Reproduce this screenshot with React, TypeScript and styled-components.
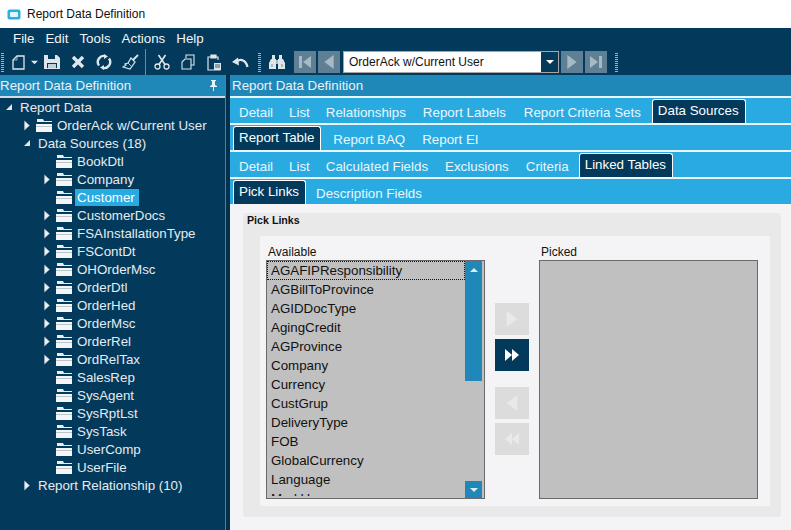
import styled, { createGlobalStyle } from "styled-components";

const navy = "#033a5c";
const sky = "#29abe2";
const steel = "#2088b8";

const Global = createGlobalStyle`
  html, body { margin: 0; padding: 0; background: #f4f4f6; }
  body { font-family: "Liberation Sans", Arial, sans-serif; overflow: hidden; }
`;

const Window = styled.div`
  width: 791px;
  height: 530px;
  display: flex;
  flex-direction: column;
  overflow: hidden;
  background: ${navy};
`;

const TitleBar = styled.div`
  height: 28px;
  flex: none;
  background: #fff;
  display: flex;
  align-items: center;
  gap: 6px;
  padding-left: 7px;
  font-size: 12px;
  color: #111;
`;

const MenuBar = styled.div`
  height: 21px;
  flex: none;
  display: flex;
  align-items: center;
  padding-left: 13px;
  gap: 11px;
  font-size: 13.33px;
  color: #f2f5f7;
`;

const Toolbar = styled.div`
  height: 26px;
  flex: none;
  display: flex;
  align-items: center;
  padding-left: 1px;
`;

const Grip = styled.div<{ $ml?: number }>`
  width: 3px;
  height: 19px;
  flex: none;
  margin: 0 2px 0 ${(p) => p.$ml ?? 0}px;
  background: repeating-linear-gradient(to bottom, #9fb0bc 0 1px, transparent 1px 2px);
`;

const ToolIcon = styled.span<{ $w?: number }>`
  width: ${(p) => p.$w ?? 26}px;
  height: 26px;
  flex: none;
  display: flex;
  align-items: center;
  justify-content: center;
`;

const ToolDivider = styled.div`
  width: 1px;
  height: 26px;
  flex: none;
  margin: 0 3px 0 2px;
  background: #6f8a9c;
`;

const NavGroup = styled.div`
  display: flex;
  align-items: center;
  margin-left: 3px;
`;

const NavButton = styled.span`
  width: 22px;
  height: 22px;
  flex: none;
  margin-right: 2px;
  display: flex;
  align-items: center;
  justify-content: center;
  background: #5f7f94;
`;

const Combo = styled.div`
  width: 216px;
  height: 22px;
  flex: none;
  box-sizing: border-box;
  margin: 0 2px 0 1px;
  border: 1px solid #a5a5a5;
  background: #fff;
  display: flex;
  align-items: center;
  padding-left: 5px;
  font-size: 12px;
  color: #111;
`;

const ComboText = styled.span`
  flex: 1;
`;

const ComboArrow = styled.span`
  width: 17px;
  height: 20px;
  display: flex;
  align-items: center;
  justify-content: center;
  background: ${navy};
`;

const Main = styled.div`
  flex: 1;
  display: flex;
  min-height: 0;
`;

const LeftPane = styled.div`
  width: 226px;
  box-sizing: border-box;
  flex: none;
  display: flex;
  flex-direction: column;
  border-right: 1px solid #5f7a8c;
`;

const PaneHeader = styled.div<{ $pad: number }>`
  height: 21px;
  flex: none;
  background: ${steel};
  color: #e9f3f8;
  font-size: 13.33px;
  display: flex;
  align-items: center;
  justify-content: space-between;
  padding: 0 7px 0 ${(p) => p.$pad}px;
`;

const Tree = styled.div`
  flex: 1;
  border-top: 2px solid #d5dde2;
  color: #e6ebef;
  font-size: 13.33px;
`;

const TreeRow = styled.div<{ $indent: number }>`
  height: 18px;
  display: flex;
  align-items: center;
  padding-left: ${(p) => p.$indent}px;
`;

const Twisty = styled.span`
  width: 13px;
  flex: none;
  margin-right: 3px;
  display: flex;
  align-items: center;
  justify-content: center;
`;

const FolderBox = styled.span`
  width: 16px;
  flex: none;
  margin-right: 3px;
  display: flex;
`;

const TreeLabel = styled.span<{ $selected?: boolean }>`
  padding: 0 4px 0 2px;
  line-height: 17px;
  background: ${(p) => (p.$selected ? sky : "transparent")};
  color: ${(p) => (p.$selected ? "#fff" : "inherit")};
`;

const Splitter = styled.div`
  width: 4px;
  flex: none;
  background: #02304d;
`;

const RightPane = styled.div`
  flex: 1;
  display: flex;
  flex-direction: column;
  background: #f4f4f6;
  min-width: 0;
`;

const TabRow = styled.div`
  height: 27px;
  flex: none;
  box-sizing: border-box;
  background: ${sky};
  border-top: 2px solid #e9f6fc;
  display: flex;
  align-items: flex-end;
  padding-left: 1px;
`;

const Tab = styled.div<{ $active?: boolean; $ml?: number; $mr?: number }>`
  height: ${(p) => (p.$active ? 24 : 22)}px;
  box-sizing: border-box;
  padding: ${(p) => (p.$active ? "0 6px 3px 5px" : "0 8px")};
  margin-left: ${(p) => p.$ml ?? 0}px;
  margin-right: ${(p) => p.$mr ?? 0}px;
  display: flex;
  align-items: center;
  font-size: 13.33px;
  color: ${(p) => (p.$active ? "#fff" : "#eaf7fd")};
  background: ${(p) => (p.$active ? navy : "transparent")};
  border: ${(p) => (p.$active ? "1px solid #fff" : "none")};
  border-bottom: none;
  border-radius: 3px 3px 0 0;
`;

const Content = styled.div`
  flex: 1;
  padding: 9px 10px 13px 13px;
  display: flex;
  min-height: 0;
`;

const GroupBox = styled.div`
  flex: 1;
  position: relative;
  background: #e9e9e9;
  border-radius: 3px;
  padding: 23px 11px 11px 17px;
  display: flex;
`;

const GroupTitle = styled.div`
  position: absolute;
  left: 4px;
  top: 1px;
  font-size: 10.67px;
  font-weight: bold;
  color: #111;
`;

const GroupInner = styled.div`
  flex: 1;
  background: #f4f4f6;
  padding: 9px 12px 7px 6px;
  display: flex;
`;

const ListColumn = styled.div`
  width: 219px;
  flex: none;
  display: flex;
  flex-direction: column;
`;

const ListLabel = styled.div`
  height: 15px;
  padding-left: 2px;
  font-size: 12px;
  line-height: 15px;
  color: #111;
`;

const ListBox = styled.div`
  flex: 1;
  box-sizing: border-box;
  position: relative;
  background: #c0c0c0;
  border: 1px solid #6a6a6a;
  overflow: hidden;
  min-height: 0;
`;

const ListItems = styled.div`
  height: 235px;
  overflow: hidden;
`;

const ListItem = styled.div<{ $focus?: boolean }>`
  height: 19px;
  box-sizing: border-box;
  width: 198px;
  padding-left: 4px;
  font-size: 13.33px;
  line-height: 19px;
  color: #111;
  outline: ${(p) => (p.$focus ? "1px dotted #111" : "none")};
  outline-offset: -1px;
`;

const ScrollTrack = styled.div`
  position: absolute;
  right: 2px;
  top: 0;
  bottom: 0;
  width: 17px;
  display: flex;
  flex-direction: column;
`;

const ScrollThumb = styled.div`
  height: 120px;
  background: ${steel};
  display: flex;
  justify-content: center;
  padding-top: 5px;
  box-sizing: border-box;
`;

const ScrollDown = styled.div`
  margin-top: auto;
  height: 17px;
  background: ${steel};
  display: flex;
  justify-content: center;
  align-items: center;
`;

const MoveColumn = styled.div`
  width: 54px;
  flex: none;
  padding: 58px 10px 0;
  box-sizing: border-box;
  display: flex;
  flex-direction: column;
`;

const MoveButton = styled.div<{ $on?: boolean; $gap: number }>`
  width: 34px;
  height: 32px;
  flex: none;
  margin-bottom: ${(p) => p.$gap}px;
  background: ${(p) => (p.$on ? navy : "#dcdcdc")};
  display: flex;
  align-items: center;
  justify-content: center;
`;

const Triangle = ({ dir, fill, size = 12 }: { dir: "l" | "r" | "u" | "d"; fill: string; size?: number }) => {
  const pts = { r: "2,0 10,6 2,12", l: "10,0 2,6 10,12", u: "0,9 6,3 12,9", d: "0,3 12,3 6,9" }[dir];
  return (
    <svg width={size} height={size} viewBox="0 0 12 12">
      <polygon points={pts} fill={fill} />
    </svg>
  );
};

const Double = ({ dir, fill }: { dir: "l" | "r"; fill: string }) => (
  <svg width="16" height="14" viewBox="0 0 16 14">
    <polygon points={dir === "r" ? "1,1 8,7 1,13" : "8,1 1,7 8,13"} fill={fill} />
    <polygon points={dir === "r" ? "8,1 15,7 8,13" : "15,1 8,7 15,13"} fill={fill} />
  </svg>
);

const Folder = () => (
  <svg width="16" height="13" viewBox="0 0 16 13">
    <path d="M1 0h6l1 2h8v1H1z" fill="#e8edf0" />
    <path d="M0 5h16v8H0z" fill="#f3f5f6" />
    <path d="M0 7h16v1H0z" fill="#b9c5cd" />
  </svg>
);

const Expand = () => (
  <svg width="8" height="11" viewBox="0 0 8 11">
    <polygon points="1.5,1 6.5,5.5 1.5,10" fill="#eef1f3" stroke="#9fb0bc" strokeWidth="0.6" />
  </svg>
);

const Collapse = () => (
  <svg width="8" height="8" viewBox="0 0 8 8">
    <polygon points="7,1 7,7 1,7" fill="#dfe5e9" />
  </svg>
);

const ic = "#dfe6ea";

const NewIcon = () => (
  <svg width="13" height="15" viewBox="0 0 13 15" fill="none" stroke={ic} strokeWidth="1.3">
    <path d="M5 1h7v13H1V5z" />
    <path d="M5 1v4H1" strokeWidth="0.7" />
  </svg>
);
const SaveIcon = () => (
  <svg width="16" height="16" viewBox="0 0 16 16">
    <path d="M0 1h13l3 3v11H0z" fill={ic} />
    <path d="M4 1h7v4H4zM3 9h10v5H3z" fill={navy} />
    <path d="M4 10h8v4H4z" fill="#c4d0d8" />
  </svg>
);
const CloseIcon = () => (
  <svg width="14" height="14" viewBox="0 0 14 14">
    <path d="M2 2l10 10M12 2L2 12" stroke={ic} strokeWidth="3.4" />
  </svg>
);
const RefreshIcon = () => (
  <svg width="16" height="16" viewBox="0 0 16 16" fill="none" stroke={ic} strokeWidth="2.4">
    <path d="M3 11.5A6 6 0 0 1 9.5 2.2" />
    <path d="M13 4.5A6 6 0 0 1 6.5 13.8" />
    <path d="M8 0l4 2.5-4 2.5zM8 16l-4-2.5 4-2.5z" fill={ic} stroke="none" />
  </svg>
);
const BroomIcon = () => (
  <svg width="17" height="17" viewBox="0 0 17 17" fill="none" stroke={ic} strokeWidth="1.2">
    <path d="M16 1l-5 5" strokeWidth="1.8" />
    <path d="M9 4l4 4-5 7-7-2 3-2-1-1 3-1z" />
    <path d="M6 9l3 3" strokeWidth="0.8" />
  </svg>
);
const CutIcon = () => (
  <svg width="16" height="16" viewBox="0 0 16 16" fill="none" stroke={ic} strokeWidth="1.3">
    <circle cx="3.5" cy="12.5" r="2.5" />
    <circle cx="12.5" cy="12.5" r="2.5" />
    <path d="M5 10.5L11.5 1M11 10.5L4.5 1" strokeWidth="1.6" />
  </svg>
);
const CopyIcon = () => (
  <svg width="14" height="16" viewBox="0 0 14 16" fill="none" stroke={ic} strokeWidth="1.1">
    <path d="M5 4V1h8v10h-3" />
    <path d="M4 5h6v10H1V8z" />
  </svg>
);
const PasteIcon = () => (
  <svg width="15" height="17" viewBox="0 0 15 17" fill="none" stroke={ic} strokeWidth="1.2">
    <path d="M4 3H1v13h12V9M11 6V3H8" />
    <path d="M4 1h5v3H4z" fill={ic} />
    <path d="M7 9h7v7H7z" fill={ic} stroke="none" />
    <path d="M8 11h5M8 13h5" stroke={navy} strokeWidth="0.8" />
  </svg>
);
const UndoIcon = () => (
  <svg width="17" height="12" viewBox="0 0 17 12" fill="none">
    <path d="M4 6.5C7 2.5 13.5 2.5 15.5 11" stroke={ic} strokeWidth="2.2" />
    <polygon points="0,6 6,1.5 7,9.5" fill={ic} />
  </svg>
);
const BinocularsIcon = () => (
  <svg width="16" height="14" viewBox="0 0 16 14">
    <path d="M3 0h3v4h1v10H0V8l2-4h1zM10 0h3v4h1l2 4v6H9V4h1z" fill={ic} />
    <path d="M7 5h2v4H7z" fill="#a9bac5" />
    <path d="M2 9h2v3H2zM12 9h2v3h-2z" fill="#a9bac5" />
  </svg>
);
const SkipIcon = ({ flip }: { flip?: boolean }) => (
  <svg width="14" height="14" viewBox="0 0 14 14" style={flip ? { transform: "scaleX(-1)" } : undefined}>
    <path d="M1 1h3v12H1z M13 1v12L5 7z" fill="#a6b9c5" />
  </svg>
);
const PinIcon = () => (
  <svg width="9" height="11" viewBox="0 0 9 11">
    <path d="M2 0h5v1H6v4l2 1v1H5v4H4V7H1V6l2-1V1H2z" fill="#e9f3f8" />
  </svg>
);

const AppIcon = () => (
  <svg width="14" height="11" viewBox="0 0 14 11">
    <rect x="0.5" y="0.5" width="13" height="10" rx="2" fill="#2bb0e4" />
    <rect x="3" y="3" width="8" height="5" rx="1" fill="#e4f6fd" />
  </svg>
);

const sources: { name: string; kids?: boolean; selected?: boolean }[] = [
  { name: "BookDtl" },
  { name: "Company", kids: true },
  { name: "Customer", selected: true },
  { name: "CustomerDocs", kids: true },
  { name: "FSAInstallationType", kids: true },
  { name: "FSContDt", kids: true },
  { name: "OHOrderMsc", kids: true },
  { name: "OrderDtl", kids: true },
  { name: "OrderHed", kids: true },
  { name: "OrderMsc", kids: true },
  { name: "OrderRel", kids: true },
  { name: "OrdRelTax", kids: true },
  { name: "SalesRep" },
  { name: "SysAgent" },
  { name: "SysRptLst" },
  { name: "SysTask" },
  { name: "UserComp" },
  { name: "UserFile" },
];

const available = [
  "AGAFIPResponsibility",
  "AGBillToProvince",
  "AGIDDocType",
  "AgingCredit",
  "AGProvince",
  "Company",
  "Currency",
  "CustGrup",
  "DeliveryType",
  "FOB",
  "GlobalCurrency",
  "Language",
  "MarkUp",
];

export default function App() {
  return (
    <Window>
      <Global />
      <TitleBar>
        <AppIcon />
        Report Data Definition
      </TitleBar>
      <MenuBar>
        <span>File</span>
        <span>Edit</span>
        <span>Tools</span>
        <span>Actions</span>
        <span>Help</span>
      </MenuBar>
      <Toolbar>
        <Grip />
        <ToolIcon $w={24}><NewIcon /></ToolIcon>
        <ToolIcon $w={9}><Triangle dir="d" fill={ic} size={7} /></ToolIcon>
        <ToolIcon><SaveIcon /></ToolIcon>
        <ToolIcon><CloseIcon /></ToolIcon>
        <ToolIcon><RefreshIcon /></ToolIcon>
        <ToolIcon><BroomIcon /></ToolIcon>
        <ToolDivider />
        <ToolIcon><CutIcon /></ToolIcon>
        <ToolIcon><CopyIcon /></ToolIcon>
        <ToolIcon><PasteIcon /></ToolIcon>
        <ToolIcon><UndoIcon /></ToolIcon>
        <Grip $ml={5} />
        <ToolIcon $w={28}><BinocularsIcon /></ToolIcon>
        <NavGroup>
          <NavButton><SkipIcon /></NavButton>
          <NavButton><Triangle dir="l" fill="#a6b9c5" size={14} /></NavButton>
          <Combo>
            <ComboText>OrderAck w/Current User</ComboText>
            <ComboArrow><Triangle dir="d" fill="#fff" size={8} /></ComboArrow>
          </Combo>
          <NavButton><Triangle dir="r" fill="#a6b9c5" size={14} /></NavButton>
          <NavButton><SkipIcon flip /></NavButton>
        </NavGroup>
        <Grip $ml={6} />
      </Toolbar>
      <Main>
        <LeftPane>
          <PaneHeader $pad={0}>
            Report Data Definition
            <PinIcon />
          </PaneHeader>
          <Tree>
            <TreeRow $indent={2}>
              <Twisty><Collapse /></Twisty>
              <TreeLabel>Report Data</TreeLabel>
            </TreeRow>
            <TreeRow $indent={20}>
              <Twisty><Expand /></Twisty>
              <FolderBox><Folder /></FolderBox>
              <TreeLabel>OrderAck w/Current User</TreeLabel>
            </TreeRow>
            <TreeRow $indent={20}>
              <Twisty><Collapse /></Twisty>
              <TreeLabel>Data Sources (18)</TreeLabel>
            </TreeRow>
            {sources.map((s) => (
              <TreeRow $indent={40} key={s.name}>
                <Twisty>{s.kids && <Expand />}</Twisty>
                <FolderBox><Folder /></FolderBox>
                <TreeLabel $selected={s.selected}>{s.name}</TreeLabel>
              </TreeRow>
            ))}
            <TreeRow $indent={20}>
              <Twisty><Expand /></Twisty>
              <TreeLabel>Report Relationship (10)</TreeLabel>
            </TreeRow>
          </Tree>
        </LeftPane>
        <Splitter />
        <RightPane>
          <PaneHeader $pad={2}>Report Data Definition</PaneHeader>
          <TabRow>
            <Tab>Detail</Tab>
            <Tab>List</Tab>
            <Tab $mr={1}>Relationships</Tab>
            <Tab $mr={2}>Report Labels</Tab>
            <Tab>Report Criteria Sets</Tab>
            <Tab $active $ml={3}>Data Sources</Tab>
          </TabRow>
          <TabRow>
            <Tab $active $ml={2} $mr={4}>Report Table</Tab>
            <Tab $mr={1}>Report BAQ</Tab>
            <Tab>Report EI</Tab>
          </TabRow>
          <TabRow>
            <Tab>Detail</Tab>
            <Tab>List</Tab>
            <Tab $mr={1}>Calculated Fields</Tab>
            <Tab $mr={1}>Exclusions</Tab>
            <Tab>Criteria</Tab>
            <Tab $active $ml={2}>Linked Tables</Tab>
          </TabRow>
          <TabRow>
            <Tab $active $ml={2} $mr={2}>Pick Links</Tab>
            <Tab>Description Fields</Tab>
          </TabRow>
          <Content>
            <GroupBox>
              <GroupTitle>Pick Links</GroupTitle>
              <GroupInner>
                <ListColumn>
                  <ListLabel>Available</ListLabel>
                  <ListBox>
                    <ListItems>
                      {available.map((a, i) => (
                        <ListItem key={a} $focus={i === 0}>{a}</ListItem>
                      ))}
                    </ListItems>
                    <ScrollTrack>
                      <ScrollThumb><Triangle dir="u" fill="#dcecf4" size={8} /></ScrollThumb>
                      <ScrollDown><Triangle dir="d" fill="#dcecf4" size={8} /></ScrollDown>
                    </ScrollTrack>
                  </ListBox>
                </ListColumn>
                <MoveColumn>
                  <MoveButton $gap={4}><Triangle dir="r" fill="#e9e9e9" size={16} /></MoveButton>
                  <MoveButton $on $gap={16}><Double dir="r" fill="#fff" /></MoveButton>
                  <MoveButton $gap={4}><Triangle dir="l" fill="#e9e9e9" size={16} /></MoveButton>
                  <MoveButton $gap={0}><Double dir="l" fill="#e9e9e9" /></MoveButton>
                </MoveColumn>
                <ListColumn>
                  <ListLabel>Picked</ListLabel>
                  <ListBox />
                </ListColumn>
              </GroupInner>
            </GroupBox>
          </Content>
        </RightPane>
      </Main>
    </Window>
  );
}
